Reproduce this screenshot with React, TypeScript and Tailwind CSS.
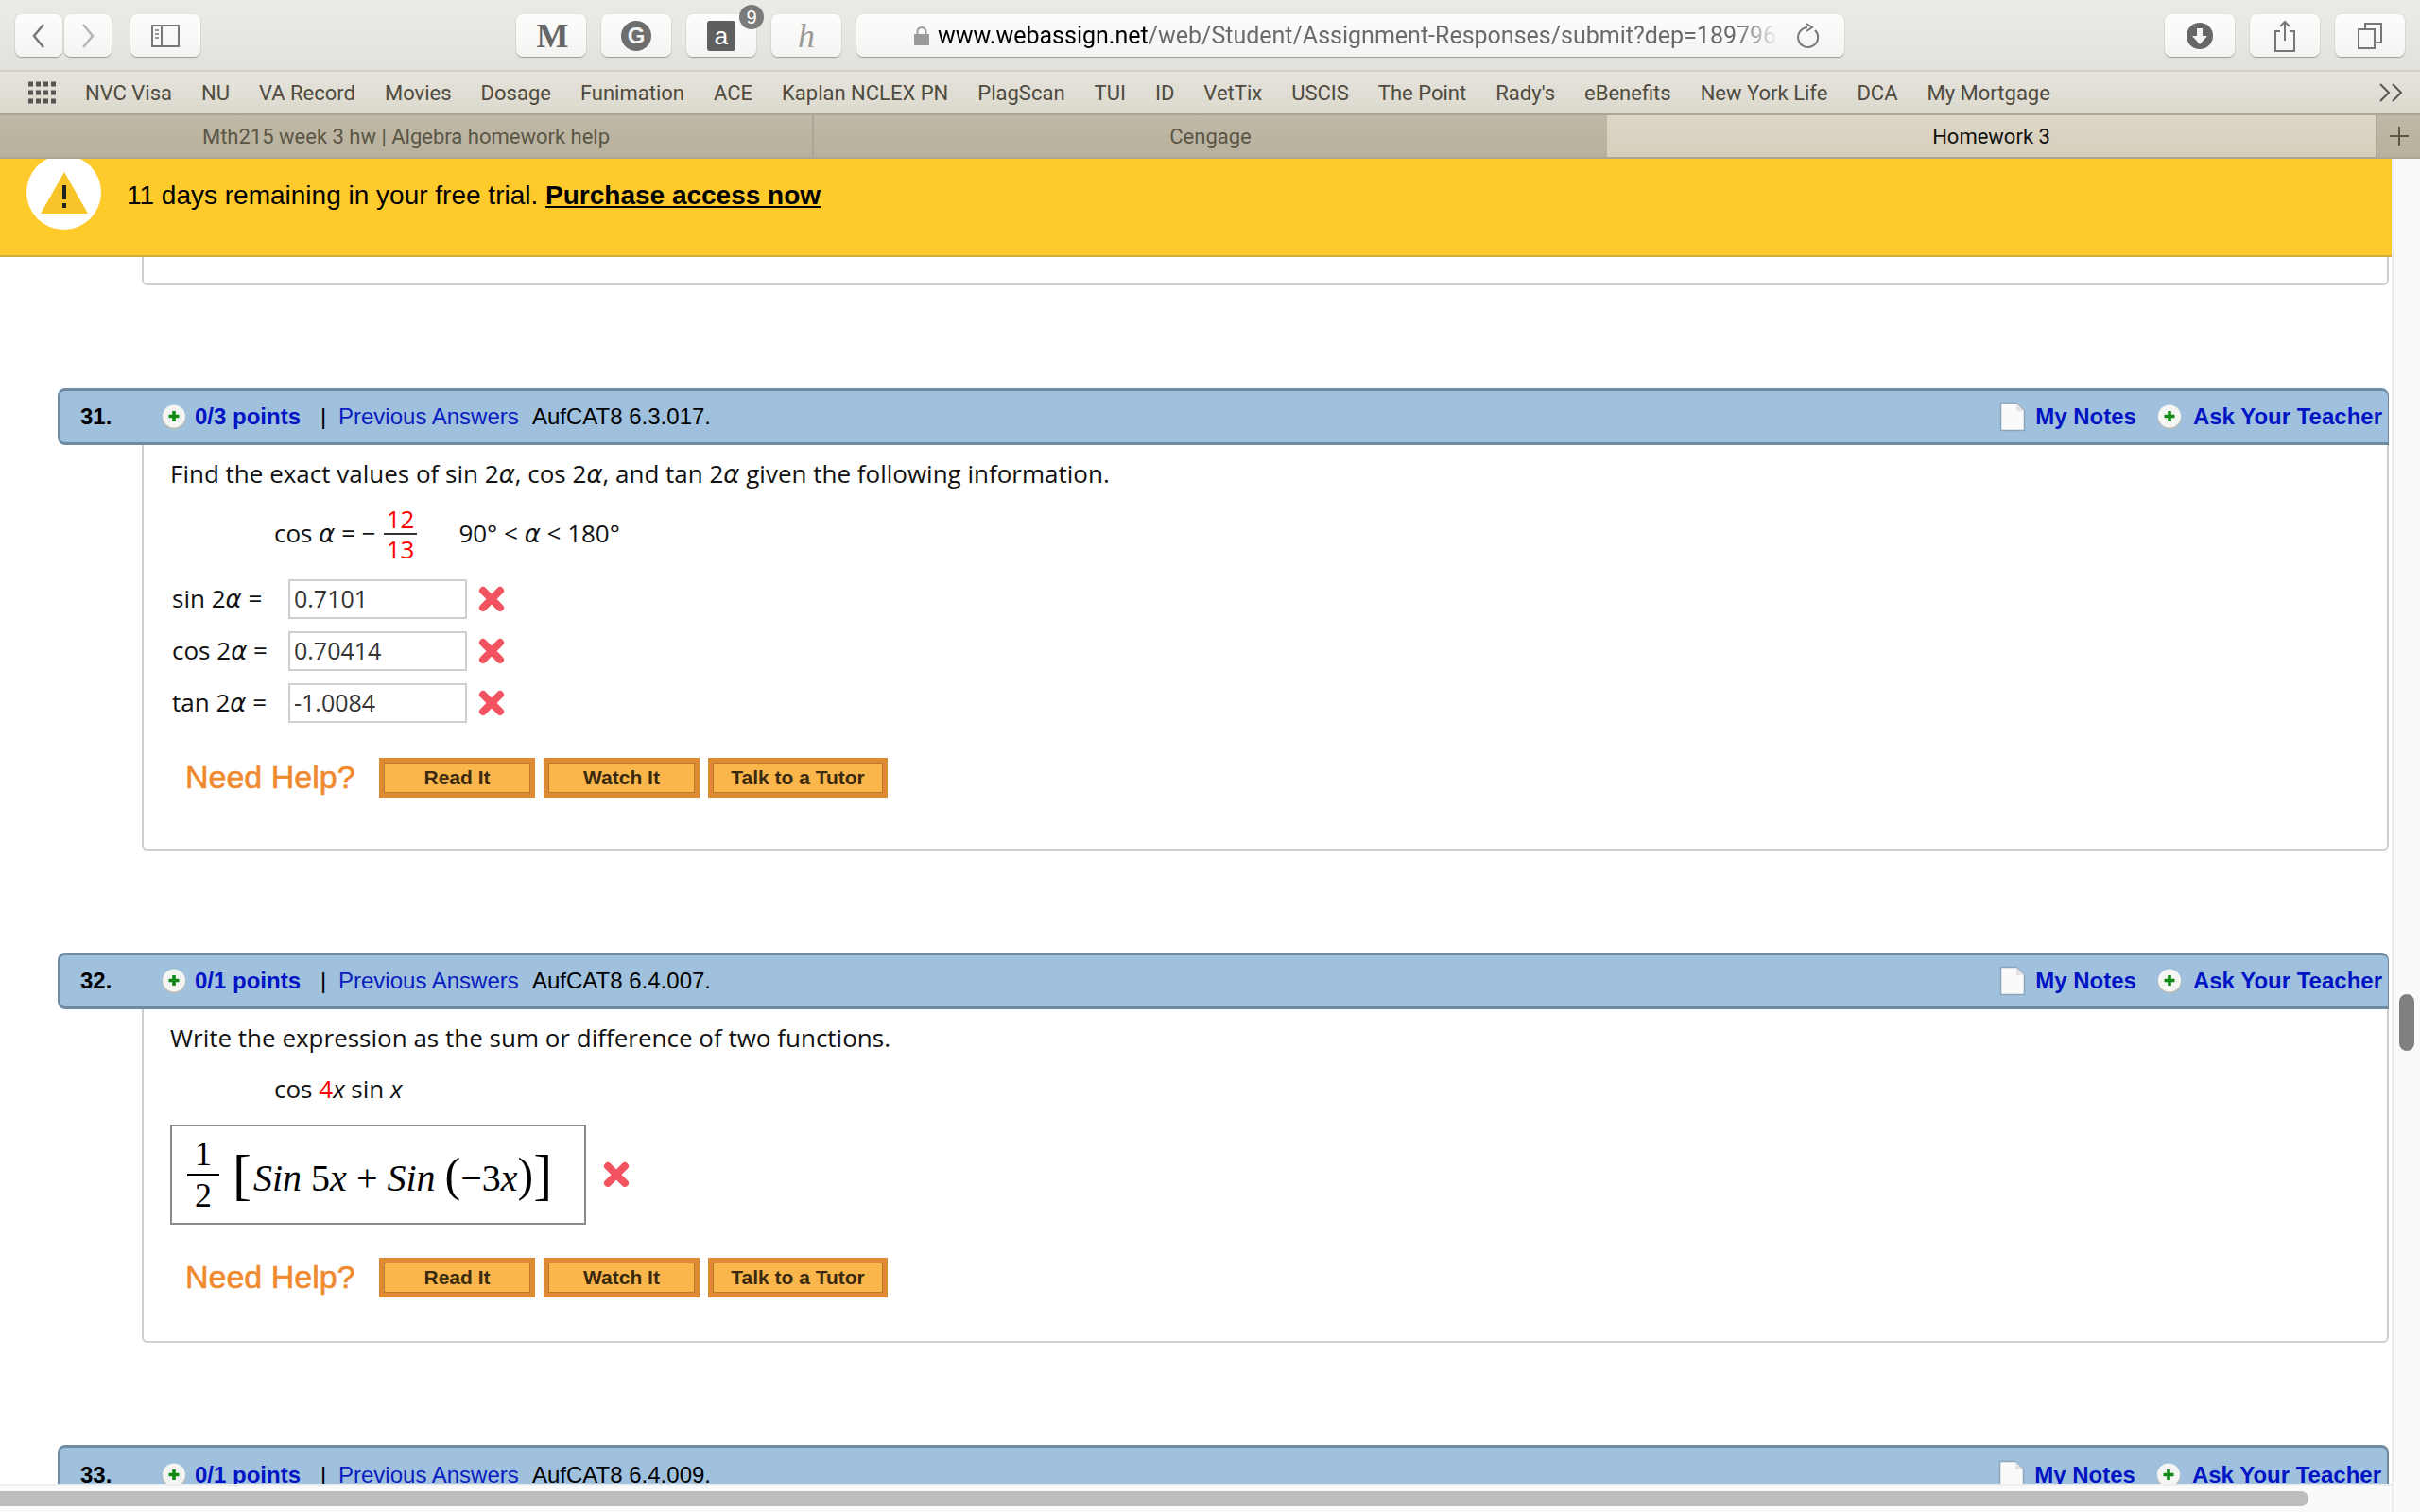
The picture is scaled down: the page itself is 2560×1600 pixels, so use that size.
import type { ReactNode } from "react";

const bookmarks = ["NVC Visa", "NU", "VA Record", "Movies", "Dosage", "Funimation", "ACE", "Kaplan NCLEX PN", "PlagScan", "TUI", "ID", "VetTix", "USCIS", "The Point", "Rady's", "eBenefits", "New York Life", "DCA", "My Mortgage"];

function ToolButton({ className, children }: { className: string; children?: ReactNode }) {
  return (
    <div className={`relative flex h-[45px] items-center justify-center rounded-[7px] bg-gradient-to-b from-[#fdfdfc] to-[#f3f3f1] shadow-[0_1px_1px_rgba(0,0,0,0.3),0_0_1px_rgba(0,0,0,0.25)] ${className}`}>
      {children}
    </div>
  );
}

function PlusBall() {
  return (
    <svg width="28" height="28" viewBox="0 0 28 28" className="shrink-0">
      <circle cx="14" cy="15" r="12.5" fill="#b9bdb9" />
      <circle cx="14" cy="13.5" r="12" fill="#f5f5f3" />
      <path d="M14 8v11M8.5 13.5h11" stroke="#108a14" strokeWidth="3.6" />
    </svg>
  );
}

function NoteIcon() {
  return (
    <svg width="28" height="32" viewBox="0 0 28 32" className="shrink-0">
      <path d="M1.5 1.5H18L26.500 10V30.500H1.500Z" fill="#fafafa" stroke="#8ba5ba" strokeWidth="1.500" />
      <path d="M18 1.500V10H26.500Z" fill="#e4e4e4" />
    </svg>
  );
}

function RedX() {
  return (
    <svg width="28" height="28" viewBox="0 0 28 28" className="shrink-0">
      <path d="M5 5L23 23M23 5L5 23" stroke="#f2545f" strokeWidth="8" strokeLinecap="round" />
    </svg>
  );
}

function Header({ num, points, code, last }: { num: string; points: string; code: string; last?: boolean }) {
  return (
    <div className={`ml-[61px] mr-[3px] flex h-[60px] shrink-0 items-center border-[#6e8ba3] bg-[#9fc1dd] font-['Liberation_Sans',sans-serif] text-[24px] ${last ? "rounded-t-[8px] border-x-2 border-t-[3px]" : "rounded-t-[8px] rounded-bl-[8px] border-y-[3px] border-l-2 border-r"}`}>
      <b className="ml-[22px] w-[85px] text-black">{num}</b>
      <PlusBall />
      <b className="ml-[8px] w-[133px] text-[#0014c4]">{points}</b>
      <span className="w-[19px] text-black">|</span>
      <span className="w-[205px] text-[#0a1dc0]">Previous Answers</span>
      <span className="text-black">{code}</span>
      <div className="ml-auto flex items-center">
        <NoteIcon />
        <b className="ml-[10px] text-[#0014c4]">My Notes</b>
        <div className="ml-[21px]"><PlusBall /></div>
        <b className="ml-[11px] mr-[6px] text-[#0014c4]">Ask Your Teacher</b>
      </div>
    </div>
  );
}

function HelpRow() {
  const btn = "flex h-[42px] items-center justify-center border-2 border-[#dd8a32] bg-[#dd8a32] p-[3px]";
  const face = "flex h-full w-full items-center justify-center border border-[#b97a2c] bg-[#fbb64b] font-['Liberation_Sans',sans-serif] text-[21px] font-bold text-[#3a2a10]";
  return (
    <div className="ml-[16px] flex items-center">
      <span className="w-[205px] font-['Liberation_Sans',sans-serif] text-[34px] text-[#ef8a2f] [-webkit-text-stroke:0.6px_#ef8a2f]">Need Help?</span>
      <div className={`${btn} w-[165px]`}><div className={face}>Read It</div></div>
      <div className={`${btn} ml-[9px] w-[165px]`}><div className={face}>Watch It</div></div>
      <div className={`${btn} ml-[9px] w-[190px]`}><div className={face}>Talk to a Tutor</div></div>
    </div>
  );
}

function Alpha() {
  return <i className="font-['DejaVu_Sans',sans-serif]">α</i>;
}

function AnswerRow({ fn, value, gap }: { fn: string; value: string; gap: string }) {
  return (
    <div className="flex h-[42px] items-center">
      <span className={`w-[125px] pl-[2px] ${gap}`}>{fn} 2<Alpha /> =</span>
      <div className="flex h-[42px] w-[189px] items-center border-2 border-[#cfcfcf] pl-[4px] text-[25px] text-[#333]">{value}</div>
      <div className="ml-[12px]"><RedX /></div>
    </div>
  );
}

export default function App() {
  return (
    <div className="flex h-screen w-full flex-col overflow-hidden bg-white font-['Open_Sans',sans-serif]">
      {/* toolbar */}
      <div className="flex h-[76px] shrink-0 items-start border-b-2 border-[#d3d1cb] bg-gradient-to-b from-[#ecebe8] to-[#e3e1db] pl-[16px] pr-[16px] pt-[15px]">
        <ToolButton className="w-[50px]">
          <svg width="18" height="28" viewBox="0 0 18 28"><path d="M14 2L4 14L14 26" fill="none" stroke="#777" strokeWidth="2.500" /></svg>
        </ToolButton>
        <ToolButton className="ml-[2px] w-[50px]">
          <svg width="18" height="28" viewBox="0 0 18 28"><path d="M4 2L14 14L4 26" fill="none" stroke="#b5b5b5" strokeWidth="2.500" /></svg>
        </ToolButton>
        <ToolButton className="ml-[20px] w-[74px]">
          <svg width="30" height="24" viewBox="0 0 30 24"><rect x="1" y="1" width="28" height="22" fill="none" stroke="#777" strokeWidth="2" /><path d="M11 1v22" stroke="#777" strokeWidth="2" /><path d="M4 6h4M4 10h4M4 14h4" stroke="#999" strokeWidth="2" /></svg>
        </ToolButton>
        <ToolButton className="ml-[334px] w-[74px]">
          <span className="font-['Liberation_Serif',serif] text-[36px] font-bold leading-none tracking-[-3px] text-[#666]">M</span>
        </ToolButton>
        <ToolButton className="ml-[16px] w-[74px]">
          <div className="flex h-[32px] w-[32px] items-center justify-center rounded-full bg-[#6e6e6e] font-['Liberation_Sans',sans-serif] text-[24px] font-bold text-[#f5f5f5]">G</div>
        </ToolButton>
        <ToolButton className="ml-[16px] w-[74px]">
          <div className="flex h-[32px] w-[30px] items-center justify-center rounded-[3px] bg-[#5f5f5f] font-['Liberation_Sans',sans-serif] text-[26px] leading-none text-white">a</div>
          <div className="absolute right-[-8px] top-[-10px] flex h-[26px] w-[26px] items-center justify-center rounded-full bg-[#7b7b7b] font-['Liberation_Sans',sans-serif] text-[20px] text-white">9</div>
        </ToolButton>
        <ToolButton className="ml-[16px] w-[74px]">
          <span className="font-['Liberation_Serif',serif] text-[36px] italic leading-none text-[#9a9a9a]">h</span>
        </ToolButton>
        <ToolButton className="ml-[16px] w-[1045px] justify-start">
          <svg width="16" height="20" viewBox="0 0 16 20" className="ml-[61px] shrink-0"><rect x="0" y="8" width="16" height="12" rx="1" fill="#9a9a9a" /><path d="M3.500 9V5.500a4.500 4.500 0 0 1 9 0V9" fill="none" stroke="#9a9a9a" strokeWidth="2" /></svg>
          <div className="ml-[9px] w-[890px] overflow-hidden whitespace-nowrap font-['Roboto',sans-serif] text-[25px] [mask-image:linear-gradient(to_right,black_95%,transparent)]">
            <span className="text-black">www.webassign.net</span><span className="text-[#6b6b6b]">/web/Student/Assignment-Responses/submit?dep=18979612</span>
          </div>
          <svg width="26" height="28" viewBox="0 0 26 28" className="ml-[18px] shrink-0"><path d="M20 8A10.500 10.500 0 1 1 12 5" fill="none" stroke="#777" strokeWidth="2" /><path d="M11 1l6 4-6 4" fill="none" stroke="#777" strokeWidth="2" /></svg>
        </ToolButton>
        <ToolButton className="ml-[339px] w-[74px]">
          <svg width="28" height="28" viewBox="0 0 28 28"><circle cx="14" cy="14" r="14" fill="#666" /><path d="M11 6h6v8h5l-8 9-8-9h5z" fill="#f5f5f5" /></svg>
        </ToolButton>
        <ToolButton className="ml-[16px] w-[74px]">
          <svg width="24" height="34" viewBox="0 0 24 34"><path d="M7 12H2v21h20V12h-5M12 22V2M7 7l5-5 5 5" fill="none" stroke="#777" strokeWidth="2" /></svg>
        </ToolButton>
        <ToolButton className="ml-[16px] w-[74px]">
          <svg width="26" height="28" viewBox="0 0 26 28"><rect x="1" y="7" width="17" height="20" fill="none" stroke="#777" strokeWidth="2" /><path d="M8 7V1h17v20h-7" fill="none" stroke="#777" strokeWidth="2" /></svg>
        </ToolButton>
      </div>
      {/* bookmarks */}
      <div className="flex h-[46px] shrink-0 items-center border-b-2 border-[#a9a597] bg-gradient-to-b from-[#e5e3dc] to-[#dcd9cd] pl-[30px] pr-[16px] font-['Roboto',sans-serif] text-[22px] text-[#4f4b40]">
        <svg width="30" height="24" viewBox="0 0 30 24" className="mr-[30px] shrink-0">
          <path d="M0 3h30M0 12h30M0 21h30" stroke="#555" strokeWidth="5" strokeDasharray="5 3" />
        </svg>
        <div className="flex gap-[31px]">
          {bookmarks.map((b) => <span key={b} className="whitespace-nowrap">{b}</span>)}
        </div>
        <svg width="28" height="22" viewBox="0 0 28 22" className="ml-auto"><path d="M2 2l9 9-9 9M15 2l9 9-9 9" fill="none" stroke="#555" strokeWidth="2" /></svg>
      </div>
      {/* tabs */}
      <div className="flex h-[46px] shrink-0 border-b-2 border-[#a9a597] font-['Roboto',sans-serif] text-[22px] text-[#5b5645]">
        <div className="flex w-[861px] items-center justify-center border-r-2 border-[#a9a597] bg-gradient-to-b from-[#bfb9a7] to-[#b7b09c]">Mth215 week 3 hw | Algebra homework help</div>
        <div className="flex w-[839px] items-center justify-center bg-gradient-to-b from-[#bfb9a7] to-[#b7b09c]">Cengage</div>
        <div className="flex w-[813px] items-center justify-center bg-gradient-to-b from-[#dcd6c5] to-[#d6cfbc] text-[#111]">Homework 3</div>
        <div className="flex flex-1 items-center justify-center border-l-2 border-[#a9a597] bg-gradient-to-b from-[#bfb9a7] to-[#b7b09c] text-[#5b5645]">
          <svg width="24" height="24" viewBox="0 0 24 24"><path d="M12 2v20M2 12h20" stroke="#5b5645" strokeWidth="2" /></svg>
        </div>
      </div>
      {/* page */}
      <div className="flex min-h-0 flex-1">
        <div className="flex w-[2530px] flex-col">
          <div className="relative flex h-[104px] shrink-0 items-start overflow-hidden border-b-2 border-[#d0ad3a] bg-[#ffca2b] font-['Liberation_Sans',sans-serif]">
            <div className="absolute left-[28px] top-[-4px] flex h-[79px] w-[79px] items-center justify-center rounded-full bg-white">
              <svg width="50" height="44" viewBox="0 0 50 44"><path d="M25 0L50 44H0Z" fill="#f7c42a" /><path d="M25 14v15" stroke="#222" strokeWidth="4" /><path d="M25 33v5" stroke="#222" strokeWidth="4" /></svg>
            </div>
            <p className="ml-[134px] mt-[18px] text-[28px] text-black">11 days remaining in your free trial. <b className="underline">Purchase access now</b></p>
          </div>
          <div className="flex min-h-0 flex-1 flex-col overflow-hidden">
            <div className="ml-[150px] mr-[3px] h-[30px] shrink-0 rounded-b-[6px] border-x-2 border-b-2 border-[#cfcfcf]" />
            <div className="h-[109px] shrink-0" />
            <Header num="31." points="0/3 points" code="AufCAT8 6.3.017." />
            <div className="ml-[150px] mr-[3px] h-[429px] shrink-0 rounded-b-[6px] border-x-2 border-b-2 border-[#cfcfcf] pl-[28px] text-[26px] text-[#111]">
              <p className="mt-[12px] leading-[36px]">Find the exact values of sin 2<Alpha />, cos 2<Alpha />, and tan 2<Alpha /> given the following information.</p>
              <div className="mt-[14px] flex h-[62px] items-center pl-[110px]">
                <span>cos <Alpha /> = −</span>
                <div className="ml-[8px] flex flex-col items-center text-[#f00] leading-[30px]">
                  <span className="border-b-2 border-[#333] px-[3px]">12</span>
                  <span>13</span>
                </div>
                <span className="ml-[44px]">90° &lt; <Alpha /> &lt; 180°</span>
              </div>
              <div className="mt-[17px] flex flex-col gap-[13px]">
                <AnswerRow fn="sin" value="0.7101" gap="" />
                <AnswerRow fn="cos" value="0.70414" gap="" />
                <AnswerRow fn="tan" value="-1.0084" gap="" />
              </div>
              <div className="mt-[32px]"><HelpRow /></div>
            </div>
            <div className="h-[108px] shrink-0" />
            <Header num="32." points="0/1 points" code="AufCAT8 6.4.007." />
            <div className="ml-[150px] mr-[3px] h-[353px] shrink-0 rounded-b-[6px] border-x-2 border-b-2 border-[#cfcfcf] pl-[28px] text-[26px] text-[#111]">
              <p className="mt-[12px] leading-[36px]">Write the expression as the sum or difference of two functions.</p>
              <p className="mt-[18px] pl-[110px] leading-[36px]">cos <span className="text-[#f00]">4</span><i>x</i> sin <i>x</i></p>
              <div className="mt-[20px] flex items-center">
                <div className="flex h-[106px] w-[440px] items-center border-2 border-[#8a8a8a] pl-[16px] font-['Liberation_Serif',serif] text-[40px] text-black">
                  <div className="flex flex-col items-center text-[36px] leading-[42px]">
                    <span className="w-[34px] border-b-2 border-black text-center">1</span>
                    <span>2</span>
                  </div>
                  <span className="ml-[14px] text-[60px] font-light leading-none">[</span>
                  <span className="ml-[2px] whitespace-nowrap"><i>Sin</i> 5<i>x</i> + <i>Sin</i> <span className="text-[50px]">(</span>−3<i>x</i><span className="text-[50px]">)</span></span>
                  <span className="text-[60px] font-light leading-none">]</span>
                </div>
                <div className="ml-[18px]"><RedX /></div>
              </div>
              <div className="mt-[30px]"><HelpRow /></div>
            </div>
            <div className="h-[108px] shrink-0" />
            <Header num="33." points="0/1 points" code="AufCAT8 6.4.009." last />
          </div>
          {/* horizontal scrollbar */}
          <div className="flex h-[30px] shrink-0 items-start border-t-2 border-[#eeeeee] bg-[#fafafa] pt-[6px]">
            <div className="h-[16px] w-[2442px] rounded-r-full bg-[#bdbdbd]" />
          </div>
        </div>
        {/* vertical scrollbar */}
        <div className="w-[30px] border-l-2 border-[#ececec] bg-[#fafafa] pl-[6px] pt-[884px]">
          <div className="h-[60px] w-[16px] rounded-full bg-[#808080]" />
        </div>
      </div>
    </div>
  );
}
